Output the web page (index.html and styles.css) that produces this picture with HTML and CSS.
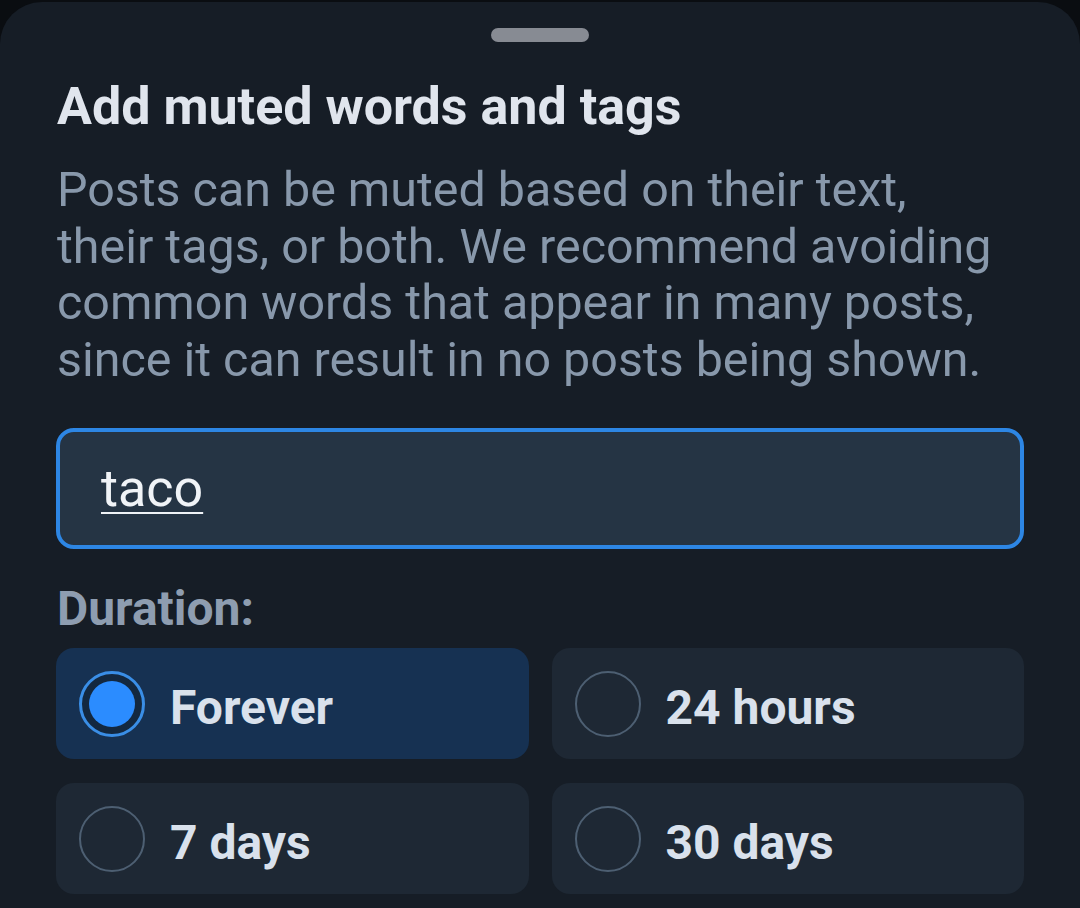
FILE: index.html
```html
<!DOCTYPE html>
<html>

<head>
    <meta charset="utf-8">
    <title>Add muted words and tags</title>
    <link rel="stylesheet" href="styles.css">
</head>

<body>
    <div class="sheet">
        <div class="handle"></div>
        <h1 class="title">Add muted words and tags</h1>
        <p class="desc">Posts can be muted based on their text, their tags, or both. We recommend avoiding common words that appear in many posts, since it can result in no posts being shown.</p>

        <div class="field">
            <span class="value">taco</span>
        </div>

        <div class="label">Duration:</div>
        <div class="options">
            <div class="option selected">
                <span class="radio"></span>
                <span class="text">Forever</span>
            </div>
            <div class="option">
                <span class="radio"></span>
                <span class="text">24 hours</span>
            </div>
            <div class="option">
                <span class="radio"></span>
                <span class="text">7 days</span>
            </div>
            <div class="option">
                <span class="radio"></span>
                <span class="text">30 days</span>
            </div>
        </div>
    </div>
</body>

</html>
```

FILE: styles.css
```css
html,
body {
    margin: 0;
    width: 100%;
    height: 100%;
    background-color: #0a0d11;
    font-family: Roboto, "Noto Sans", sans-serif;
    overflow: hidden;
}

.sheet {
    box-sizing: border-box;
    margin-top: 2px;
    height: 100%;
    padding: 26px 56px 0 56px;
    background-color: #161d26;
    border-radius: 42px 42px 0 0;
}

.handle {
    width: 98px;
    height: 14px;
    margin: 0 auto;
    border-radius: 7px;
    background-color: #878b93;
}

.title {
    margin: 35px 0 0 1px;
    font-size: 52px;
    line-height: 60px;
    font-weight: 700;
    color: #e0e5ed;
}

.desc {
    max-width: 948px;
    margin: 25px 0 0 1px;
    font-size: 48.4px;
    line-height: 56.5px;
    color: #8898ab;
}

.field {
    box-sizing: border-box;
    height: 121px;
    margin-top: 40px;
    padding-left: 41px;
    display: flex;
    align-items: center;
    border: solid 4px #2d86e4;
    border-radius: 18px;
    background-color: #253444;
}

.field .value {
    font-size: 52px;
    line-height: 60px;
    color: #f0f3f7;
    text-decoration: underline;
    text-decoration-thickness: 2px;
    text-underline-offset: 6px;
}

.label {
    margin: 32px 0 0 1px;
    font-size: 48px;
    line-height: 56px;
    font-weight: 700;
    color: #8e9db0;
}

.options {
    margin-top: 11px;
    display: grid;
    grid-template-columns: 1fr 1fr;
    column-gap: 23px;
    row-gap: 24px;
}

.option {
    height: 111px;
    display: flex;
    align-items: center;
    padding-left: 23px;
    border-radius: 18px;
    background-color: #1e2834;
}

.option.selected {
    background-color: #163152;
}

.radio {
    box-sizing: border-box;
    width: 66px;
    height: 66px;
    border-radius: 50%;
    border: solid 2px #4d5f72;
    flex-shrink: 0;
    position: relative;
}

.selected .radio {
    border: solid 3px #3a8ee6;
    background-color: #132840;
}

.selected .radio::after {
    content: "";
    position: absolute;
    top: 7px;
    left: 7px;
    width: 46px;
    height: 46px;
    border-radius: 50%;
    background-color: #2b8cff;
}

.option .text {
    margin-left: 25px;
    padding-top: 8px;
    font-size: 48px;
    font-weight: 700;
    color: #d9e1ec;
}
```
